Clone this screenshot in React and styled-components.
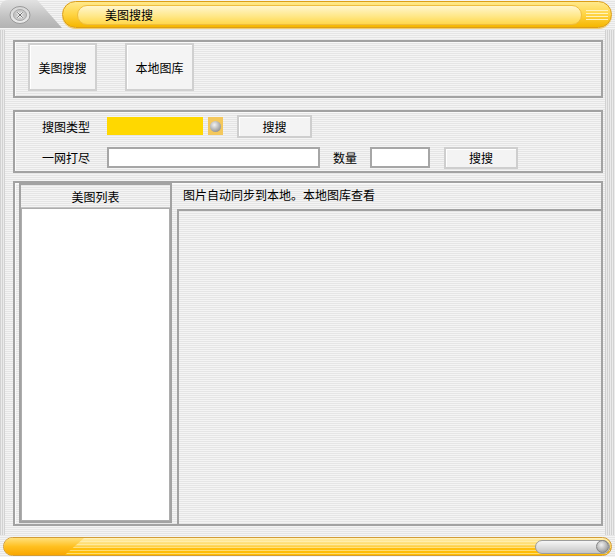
import React from "react";
import styled, { createGlobalStyle } from "styled-components";

const GlobalStyle = createGlobalStyle`
  html, body {
    margin: 0;
    padding: 0;
    background: #ececec;
  }
  body {
    font-family: "Noto Sans CJK SC", "Noto Sans", sans-serif;
    font-size: 12px;
    color: #000;
  }
`;

const hStripes = "repeating-linear-gradient(to bottom, #f4f4f4 0 1px, #e5e5e5 1px 2px)";
const vStripes = "repeating-linear-gradient(to right, #d2d2d2 0 1px, #ebebeb 1px 2px)";

const Window = styled.div`
  width: 615px;
  height: 557px;
  display: flex;
  flex-direction: column;
  background: ${hStripes};
  overflow: hidden;
`;

const TitleBar = styled.div`
  height: 30px;
  flex-shrink: 0;
  display: flex;
  align-items: flex-start;
`;

const CloseTab = styled.div`
  width: 62px;
  height: 28px;
  box-sizing: border-box;
  padding: 1px 0 0 8px;
  display: flex;
  align-items: center;
  border-top-left-radius: 8px;
  background: linear-gradient(#e2e2e2, #c2c2c2 60%, #b2b2b2);
  clip-path: polygon(0 0, 60% 0, 100% 100%, 0 100%);
`;

const TitlePill = styled.div`
  width: 550px;
  height: 27px;
  margin-top: 1px;
  box-sizing: border-box;
  padding: 0 3px 0 14px;
  display: flex;
  align-items: center;
  border: 1px solid #dc9e18;
  border-radius: 14px;
  background: linear-gradient(#ffe98c, #ffd443 50%, #f5b600);
  box-shadow: 0 1px 0 #f0cd72;
`;

const TitleInner = styled.div`
  flex: 1;
  height: 20px;
  box-sizing: border-box;
  padding: 0 0 1px 27px;
  display: flex;
  align-items: center;
  border: 1px solid #efbe40;
  border-radius: 10px;
  background: linear-gradient(#fff6cf, #ffe88a 55%, #ffd84c);
`;

const Grip = styled.span`
  width: 22px;
  height: 10px;
  margin-left: 4px;
  background: repeating-linear-gradient(to bottom, #fff2bc 0 1px, transparent 1px 3px);
`;

const Frame = styled.div`
  flex: 1;
  display: flex;
  min-height: 0;
`;

const Edge = styled.div`
  width: ${(p) => p.$w}px;
  flex-shrink: 0;
  background: ${vStripes};
`;

const Content = styled.div`
  flex: 1;
  display: flex;
  flex-direction: column;
  padding: 10px 2px 9px 8px;
  min-width: 0;
`;

const Panel = styled.div`
  box-sizing: border-box;
  border: 2px solid #a2a2a2;
  box-shadow: inset 1px 1px 0 #fafafa;
  margin-top: ${(p) => p.$gap || 0}px;
  height: ${(p) => (p.$h ? `${p.$h}px` : "auto")};
  flex: ${(p) => (p.$h ? "none" : 1)};
`;

const NavPanel = styled(Panel)`
  display: flex;
  align-items: flex-start;
  gap: 28px;
  padding: 1px 0 0 13px;
`;

const BigButton = styled.button`
  width: 69px;
  height: 48px;
  box-sizing: border-box;
  padding: 0;
  border: 2px solid #d0d0d0;
  background: #f4f4f4;
  box-shadow: inset 1px 1px 0 #ffffff;
  font: inherit;
  color: #000;
`;

const SearchPanel = styled(Panel)`
  display: flex;
  flex-direction: column;
  gap: 8px;
  padding-top: 2px;
`;

const FormRow = styled.div`
  height: ${(p) => p.$h}px;
  display: flex;
  align-items: center;
`;

const FieldLabel = styled.span`
  width: 75px;
  margin-right: 17px;
  text-align: right;
`;

const Caption = styled.span`
  margin-left: 13px;
`;

const Combo = styled.div`
  width: 96px;
  height: 18px;
  background: #ffd800;
`;

const Knob = styled.div`
  width: 15px;
  height: 18px;
  margin-left: 5px;
  display: flex;
  align-items: center;
  justify-content: center;
  background: #f4c85c;
`;

const Bulb = styled.span`
  width: 11px;
  height: 11px;
  border-radius: 50%;
  background: radial-gradient(circle at 40% 35%, #f2f2f2, #a2a2a2 65%, #787878);
`;

const SmallButton = styled.button`
  width: ${(p) => p.$w}px;
  height: ${(p) => p.$h}px;
  margin-left: ${(p) => p.$ml}px;
  box-sizing: border-box;
  padding: 0;
  border: 2px solid #cecece;
  background: #f3f3f3;
  box-shadow: inset 1px 1px 0 #ffffff;
  font: inherit;
  color: #000;
`;

const TextBox = styled.input`
  width: ${(p) => p.$w}px;
  height: 21px;
  margin-left: ${(p) => p.$ml || 0}px;
  box-sizing: border-box;
  padding: 0 3px;
  border: 2px solid #a6a6a6;
  background: #fff;
  font: inherit;
  outline: none;
`;

const GalleryPanel = styled(Panel)`
  display: flex;
  padding-left: 4px;
  min-height: 0;
`;

const ListBox = styled.div`
  width: 153px;
  margin-bottom: 1px;
  box-sizing: border-box;
  display: flex;
  flex-direction: column;
  border: 2px solid #a2a2a2;
`;

const ListHeader = styled.div`
  height: 22px;
  display: flex;
  align-items: center;
  justify-content: center;
  border-bottom: 1px solid #c4c4c4;
`;

const ListBody = styled.div`
  flex: 1;
  border: 1px solid #adadad;
  background: #fff;
`;

const RightCol = styled.div`
  flex: 1;
  margin-left: 5px;
  display: flex;
  flex-direction: column;
`;

const RightHeader = styled.div`
  height: 26px;
  box-sizing: border-box;
  padding: 0 0 4px 6px;
  display: flex;
  align-items: center;
`;

const ImageArea = styled.div`
  flex: 1;
  border-top: 2px solid #a2a2a2;
  border-left: 2px solid #a2a2a2;
`;

const StatusBar = styled.div`
  height: 22px;
  flex-shrink: 0;
  box-sizing: border-box;
  padding: 2px 0 0 3px;
  display: flex;
  align-items: flex-start;
`;

const StatusPill = styled.div`
  width: 609px;
  height: 19px;
  box-sizing: border-box;
  display: flex;
  align-items: center;
  overflow: hidden;
  border: 1px solid #d29c36;
  border-radius: 10px;
  background:
    repeating-linear-gradient(to bottom, rgba(255, 245, 200, 0.55) 0 1px, transparent 1px 3px),
    linear-gradient(#ffefb0, #ffd85e 45%, #ffbf10 60%, #ffbc00);
`;

const StatusSeg = styled.div`
  width: 80px;
  align-self: stretch;
  background: linear-gradient(#ffe07a, #ffc020 50%, #f9a600);
  clip-path: polygon(0 0, 100% 0, 76% 100%, 0 100%);
`;

const Spacer = styled.div`
  flex: 1;
`;

const Slider = styled.div`
  width: 75px;
  height: 14px;
  margin-right: 1px;
  box-sizing: border-box;
  display: flex;
  align-items: center;
  justify-content: flex-end;
  border: 1px solid #9c9c9c;
  border-radius: 7px;
  background: linear-gradient(#f6f6f6, #c6c6c6);
`;

const SliderKnob = styled.span`
  width: 13px;
  height: 13px;
  box-sizing: border-box;
  border: 1px solid #868686;
  border-radius: 50%;
  background: radial-gradient(circle at 40% 35%, #f0f0f0, #a4a4a4 70%, #848484);
`;

const CloseIcon = () => (
  <svg width="24" height="20" viewBox="0 0 24 20">
    <defs>
      <linearGradient id="ring" x1="0" y1="0" x2="0" y2="1">
        <stop offset="0" stopColor="#d6d6d6" />
        <stop offset="1" stopColor="#ececec" />
      </linearGradient>
    </defs>
    <ellipse cx="12" cy="10" rx="10" ry="8.5" fill="url(#ring)" stroke="#9a9a9a" />
    <ellipse cx="12" cy="10" rx="6.5" ry="5.5" fill="#c6c6c6" stroke="#a8a8a8" />
    <path d="M9.2 7.4 L14.8 12.6 M14.8 7.4 L9.2 12.6" stroke="#f6f6f6" strokeWidth="2.4" />
    <path d="M9.2 7.4 L14.8 12.6 M14.8 7.4 L9.2 12.6" stroke="#6e6e6e" strokeWidth="1" />
  </svg>
);

export default function App() {
  return (
    <>
      <GlobalStyle />
      <Window>
        <TitleBar>
          <CloseTab>
            <CloseIcon />
          </CloseTab>
          <TitlePill>
            <TitleInner>美图搜搜</TitleInner>
            <Grip />
          </TitlePill>
        </TitleBar>

        <Frame>
          <Edge $w={5} />
          <Content>
            <NavPanel $h={58}>
              <BigButton>美图搜搜</BigButton>
              <BigButton>本地图库</BigButton>
            </NavPanel>

            <SearchPanel $h={63} $gap={12}>
              <FormRow $h={24}>
                <FieldLabel>搜图类型</FieldLabel>
                <Combo />
                <Knob>
                  <Bulb />
                </Knob>
                <SmallButton $w={75} $h={23} $ml={14}>
                  搜搜
                </SmallButton>
              </FormRow>
              <FormRow $h={23}>
                <FieldLabel>一网打尽</FieldLabel>
                <TextBox $w={213} />
                <Caption>数量</Caption>
                <TextBox $w={60} $ml={13} />
                <SmallButton $w={74} $h={22} $ml={14}>
                  搜搜
                </SmallButton>
              </FormRow>
            </SearchPanel>

            <GalleryPanel $gap={8}>
              <ListBox>
                <ListHeader>美图列表</ListHeader>
                <ListBody />
              </ListBox>
              <RightCol>
                <RightHeader>图片自动同步到本地。本地图库查看</RightHeader>
                <ImageArea />
              </RightCol>
            </GalleryPanel>
          </Content>
          <Edge $w={10} />
        </Frame>

        <StatusBar>
          <StatusPill>
            <StatusSeg />
            <Spacer />
            <Slider>
              <SliderKnob />
            </Slider>
          </StatusPill>
        </StatusBar>
      </Window>
    </>
  );
}
